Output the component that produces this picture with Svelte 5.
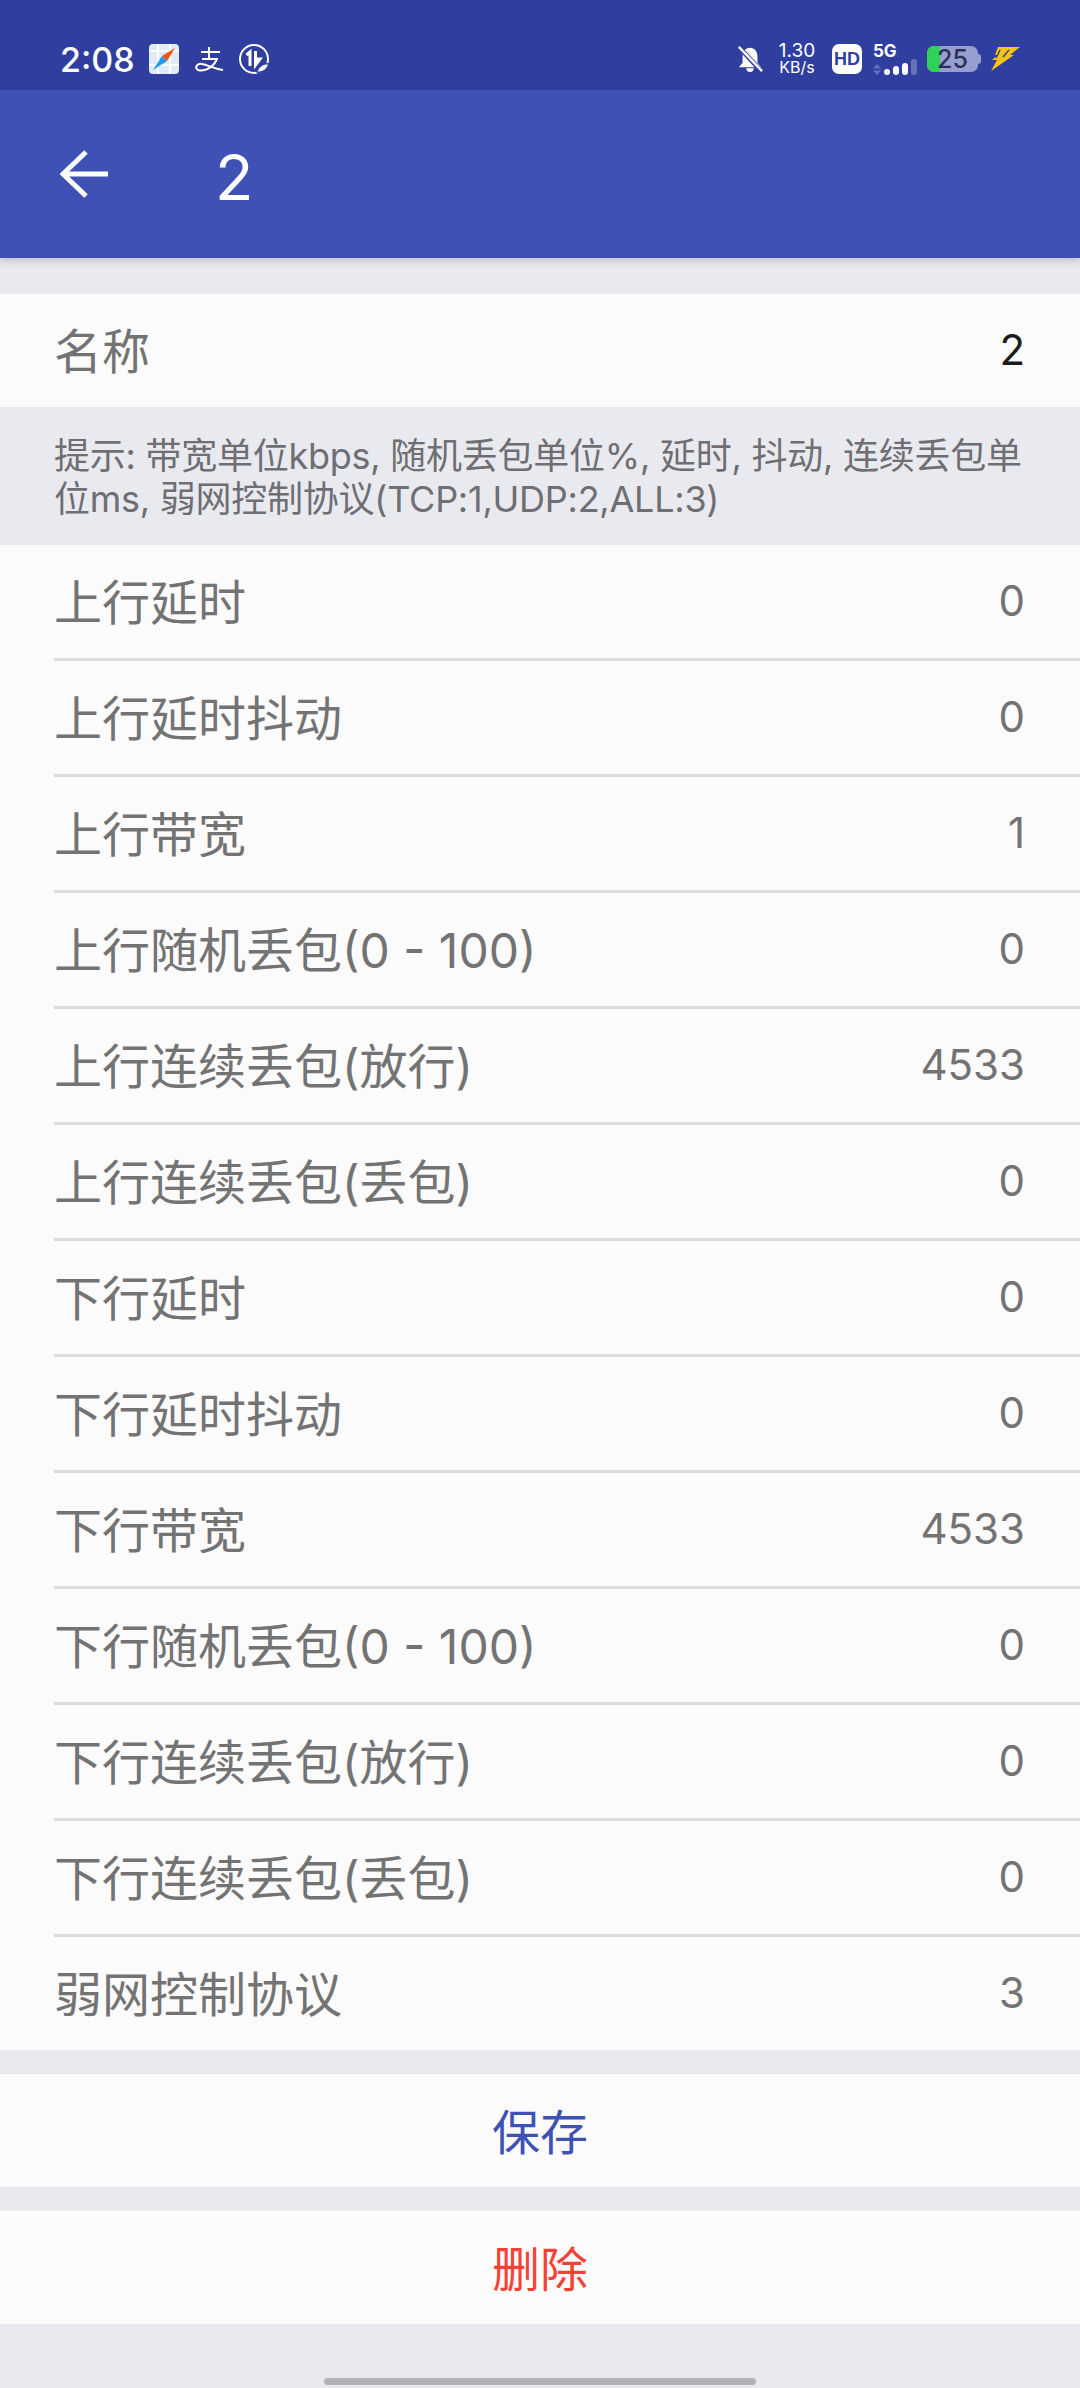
<script lang="ts">
    // Rows of the weak network profile form
    const rows = [
        { label: '上行延时', value: '0' },
        { label: '上行延时抖动', value: '0' },
        { label: '上行带宽', value: '1' },
        { label: '上行随机丢包(0 - 100)', value: '0' },
        { label: '上行连续丢包(放行)', value: '4533' },
        { label: '上行连续丢包(丢包)', value: '0' },
        { label: '下行延时', value: '0' },
        { label: '下行延时抖动', value: '0' },
        { label: '下行带宽', value: '4533' },
        { label: '下行随机丢包(0 - 100)', value: '0' },
        { label: '下行连续丢包(放行)', value: '0' },
        { label: '下行连续丢包(丢包)', value: '0' },
        { label: '弱网控制协议', value: '3' }
    ];
</script>

<div class="page">
    <div class="status">
        <span class="time">2:08</span>
        <svg class="s-icon" width="30" height="30" viewBox="0 0 30 30">
            <rect width="30" height="30" rx="4" fill="#dfeafb" />
            <path d="M0 7H30M0 21H30M9 0V30M21 0V30" stroke="#fff" stroke-width="2" />
            <path d="M4 26L13 12L18 17Z" fill="#1c9bf5" />
            <path d="M26 4L13 12L18 17Z" fill="#f4500f" />
        </svg>
        <svg class="s-icon" width="30" height="30" viewBox="0 0 30 30" fill="none" stroke="#fff" stroke-width="2">
            <path d="M7 8H26M15 3V15M8 15H24M23 15C19 24 10 28 4 26C0 24 3 19 8 20C14 21 20 25 29 26" />
        </svg>
        <svg class="s-icon" width="30" height="30" viewBox="0 0 30 30" fill="none" stroke="#fff" stroke-width="2">
            <circle cx="15" cy="15" r="14" />
            <path d="M7.500 11L11 8V22" stroke-width="3" />
            <path d="M16.500 7V21L21 15H17" stroke-width="3" />
            <path d="M18 28C19 22 25 19 30 20C29 25 24 29 18 28Z" fill="#fff" stroke="#303e9f" stroke-width="1.500" />
        </svg>
        <span class="spacer"></span>
        <svg class="bell" width="26" height="28" viewBox="0 0 28 30">
            <path d="M14 3C9 3 6 7 6 12V19L2 24H26L22 19V12C22 7 19 3 14 3ZM10 25C10 28 12 29 14 29C16 29 18 28 18 25Z" fill="#fff" />
            <path d="M1 1L27 29" stroke="#303e9f" stroke-width="5" />
            <path d="M2 2L27 28" stroke="#fff" stroke-width="2.500" />
        </svg>
        <div class="speed">1.30<br />KB/s</div>
        <div class="hd">HD</div>
        <div class="net">
            <span class="five">5G</span>
            <div class="bars">
                <svg width="8" height="11" viewBox="0 0 8 11"><path d="M4 0L8 4.500H0ZM4 11L0 6.500H8Z" fill="#6673bb" /></svg>
                <i class="b1"></i><i class="b2"></i><i class="b3"></i><i class="b4"></i>
            </div>
        </div>
        <div class="battery">
            <div class="level"></div>
            <span>25</span>
        </div>
        <span class="nub"></span>
        <svg class="bolt" width="31" height="26" viewBox="0 0 31 26">
            <path d="M9 1H31L21 9H25L2 25L8 14H3L9 9H6Z" fill="#f7c511" />
            <path d="M11 4L7 12M20 4L14 11" stroke="#303e9f" stroke-width="1.500" />
        </svg>
    </div>

    <header class="bar">
        <svg width="48" height="48" viewBox="0 0 48 48" fill="none" stroke="#fff" stroke-width="5">
            <path d="M48 24H3M26 2L3 24L26 46" />
        </svg>
        <h1>2</h1>
    </header>

    <section class="group first">
        <div class="row">
            <span class="label">名称</span>
            <span class="value dark">2</span>
        </div>
    </section>

    <p class="hint">提示: 带宽单位kbps, 随机丢包单位%, 延时, 抖动, 连续丢包单位ms, 弱网控制协议(TCP:1,UDP:2,ALL:3)</p>

    <section class="group">
        {#each rows as row}
            <div class="row line">
                <span class="label">{row.label}</span>
                <span class="value">{row.value}</span>
            </div>
        {/each}
    </section>

    <button class="action save">保存</button>
    <button class="action del">删除</button>

    <div class="home"></div>
</div>

<style>
    :global(body) {
        margin: 0;
    }

    .page {
        position: relative;
        width: 1080px;
        height: 2388px;
        background: #e9eaef;
        font-family: Inter, "Noto Sans CJK SC", sans-serif;
        overflow: hidden;
    }

    .status {
        height: 90px;
        box-sizing: border-box;
        background: #303e9f;
        display: flex;
        align-items: center;
        padding: 28px 60px 0 60px;
        color: #fff;
    }

    .time {
        font-size: 34px;
        font-weight: 500;
        margin-right: 14px;
    }

    .s-icon {
        margin-right: 15px;
    }

    .spacer {
        flex: 1;
    }

    .bell {
        margin-right: 13px;
    }

    .speed {
        font-size: 16px;
        line-height: 16px;
        text-align: center;
        margin-right: 14px;
    }

    .speed::first-line {
        font-size: 19px;
    }

    .hd {
        width: 30px;
        height: 30px;
        border-radius: 7px;
        background: #fff;
        color: #303e9f;
        font-family: "Liberation Sans", sans-serif;
        font-size: 18px;
        font-weight: 700;
        line-height: 30px;
        text-align: center;
        margin-right: 11px;
    }

    .net {
        display: flex;
        flex-direction: column;
        margin-right: 10px;
    }

    .five {
        font-size: 17px;
        font-weight: 700;
        line-height: 15px;
    }

    .bars {
        display: flex;
        align-items: flex-end;
        gap: 3px;
        height: 16px;
    }

    .bars i {
        display: block;
        width: 6px;
        border-radius: 3px;
        background: #fff;
    }

    .b1 {
        height: 6px;
    }

    .b2 {
        height: 9px;
    }

    .b3 {
        height: 12px;
    }

    .bars .b4 {
        height: 16px;
        background: #6673bb;
    }

    .battery {
        position: relative;
        width: 51px;
        height: 26px;
        border-radius: 7px;
        background: #979fd0;
        display: flex;
        align-items: center;
        justify-content: center;
    }

    .nub {
        width: 3px;
        height: 10px;
        border-radius: 0 3px 3px 0;
        background: #979fd0;
        margin-right: 8px;
    }

    .level {
        position: absolute;
        left: 0;
        top: 0;
        bottom: 0;
        width: 13px;
        border-radius: 7px 0 0 7px;
        background: #2fd158;
    }

    .battery span {
        position: relative;
        font-size: 25px;
        font-weight: 500;
        color: #2b2f55;
    }

    .bar {
        height: 168px;
        box-sizing: border-box;
        background: #3f51b5;
        display: flex;
        align-items: center;
        padding-left: 60px;
        color: #fff;
        box-shadow: 0 3px 8px rgba(0, 0, 0, 0.18);
        position: relative;
    }

    .bar h1 {
        margin: 6px 0 0 107px;
        font-size: 63px;
        font-weight: 400;
    }

    .group {
        background: #fbfbfb;
    }

    .first {
        margin-top: 36px;
    }

    .row {
        height: 113px;
        display: flex;
        align-items: center;
        justify-content: space-between;
        padding: 0 55px 0 54px;
    }

    .line {
        position: relative;
        margin-bottom: 3px;
    }

    .line:last-child {
        margin-bottom: 0;
    }

    .line:not(:last-child)::after {
        content: '';
        position: absolute;
        left: 54px;
        right: 0;
        bottom: -3px;
        height: 3px;
        background: #dcdcdc;
    }

    .label {
        font-size: 48px;
        color: #737373;
        margin-bottom: 5px;
    }

    .value {
        font-size: 42px;
        color: #737373;
        margin-bottom: 3px;
    }

    .dark {
        color: #1c1c1c;
    }

    .hint {
        height: 138px;
        box-sizing: border-box;
        margin: 0;
        padding: 28px 50px 0 54px;
        font-size: 36px;
        line-height: 43px;
        letter-spacing: -0.25px;
        color: #6e6e73;
    }

    .action {
        display: block;
        width: 100%;
        height: 113px;
        margin-top: 24px;
        padding: 0 0 4px;
        border: none;
        background: #fbfbfb;
        font-family: inherit;
        font-size: 48px;
    }

    .save {
        color: #3f51b5;
    }

    .del {
        color: #f44336;
    }

    .home {
        position: absolute;
        left: 324px;
        top: 2378px;
        width: 432px;
        height: 7px;
        border-radius: 4px;
        background: #b1b1b6;
    }
</style>
